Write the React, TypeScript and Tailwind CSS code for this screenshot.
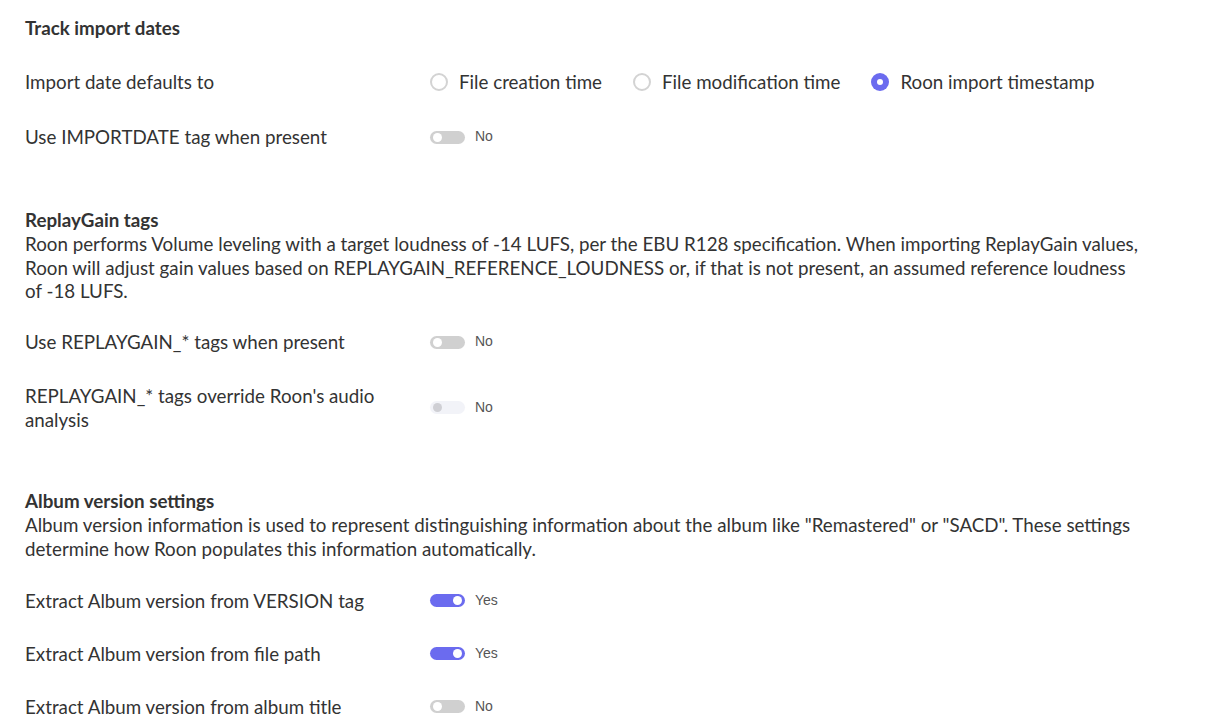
import React from "react";

const font = { fontFamily: "Lato, 'Open Sans', sans-serif" };

const Toggle = ({ on, disabled }: { on?: boolean; disabled?: boolean }) => {
  return (
    <div className="flex items-center">
      <div
        className={
          "relative h-[13px] w-[35px] rounded-full " +
          (on ? "bg-[#6b6bef]" : disabled ? "bg-[#f2f3f8]" : "bg-[#d0d0d0]")
        }
      >
        <div
          className={
            "absolute top-[2px] h-[9px] w-[9px] rounded-full " +
            (on ? "right-[3px] bg-white" : disabled ? "left-[3px] bg-[#cfcfd4]" : "left-[3px] bg-white")
          }
        />
      </div>
      <span className="ml-[10px] text-[14px] text-[#555] font-['Liberation_Sans',Arial,sans-serif]">
        {on ? "Yes" : "No"}
      </span>
    </div>
  );
};

const Radio = ({ label, checked }: { label: string; checked?: boolean }) => {
  return (
    <div className="flex items-center">
      {checked ? (
        <div className="flex h-[18px] w-[18px] items-center justify-center rounded-full bg-[#6b6bef]">
          <div className="h-[6px] w-[6px] rounded-full bg-white" />
        </div>
      ) : (
        <div className="h-[18px] w-[18px] rounded-full border-2 border-[#d3d3d3]" />
      )}
      <span className="ml-[11px]">{label}</span>
    </div>
  );
};

const Row = ({
  label,
  children,
  h = "h-[55px]",
}: {
  label: React.ReactNode;
  children: React.ReactNode;
  h?: string;
}) => {
  return (
    <div className={"flex items-center " + h}>
      <div className="w-[405px] shrink-0 pr-[25px]">{label}</div>
      <div className="flex items-center">{children}</div>
    </div>
  );
};

export default function App() {
  return (
    <div
      style={font}
      className="min-h-[719px] bg-white px-[25px] text-[18.75px] font-normal leading-[23.5px] text-[#333]"
    >
      {/* Track import dates */}
      <div className="pt-[16px]">
        <h3 className="text-[18.75px] font-bold leading-[24px]">Track import dates</h3>
        <div className="pt-[14.5px]">
          <Row label="Import date defaults to">
            <div className="flex items-center gap-[31px]">
              <Radio label="File creation time" />
              <Radio label="File modification time" />
              <Radio label="Roon import timestamp" checked />
            </div>
          </Row>
          <Row label="Use IMPORTDATE tag when present">
            <Toggle />
          </Row>
        </div>
      </div>

      {/* ReplayGain */}
      <div className="pt-[43.5px]">
        <h3 className="text-[18.75px] font-bold leading-[24px]">ReplayGain tags</h3>
        <p className="max-w-[1120px]">
          Roon performs Volume leveling with a target loudness of -14 LUFS, per the EBU R128
          specification. When importing ReplayGain values, Roon will adjust gain values based on
          REPLAYGAIN_REFERENCE_LOUDNESS or, if that is not present, an assumed reference loudness
          of -18 LUFS.
        </p>
        <div className="pt-[12px]">
          <Row label="Use REPLAYGAIN_* tags when present">
            <Toggle />
          </Row>
          <Row label="REPLAYGAIN_* tags override Roon's audio analysis" h="h-[76px]">
            <Toggle disabled />
          </Row>
        </div>
      </div>

      {/* Album version */}
      <div className="pt-[43.5px]">
        <h3 className="text-[18.75px] font-bold leading-[24px]">Album version settings</h3>
        <p className="max-w-[1120px]">
          Album version information is used to represent distinguishing information about the album
          like "Remastered" or "SACD". These settings determine how Roon populates this information
          automatically.
        </p>
        <div className="pt-[14px]">
          <Row label="Extract Album version from VERSION tag" h="h-[53px]">
            <Toggle on />
          </Row>
          <Row label="Extract Album version from file path" h="h-[53px]">
            <Toggle on />
          </Row>
          <Row label="Extract Album version from album title" h="h-[53px]">
            <Toggle />
          </Row>
        </div>
      </div>
    </div>
  );
}
